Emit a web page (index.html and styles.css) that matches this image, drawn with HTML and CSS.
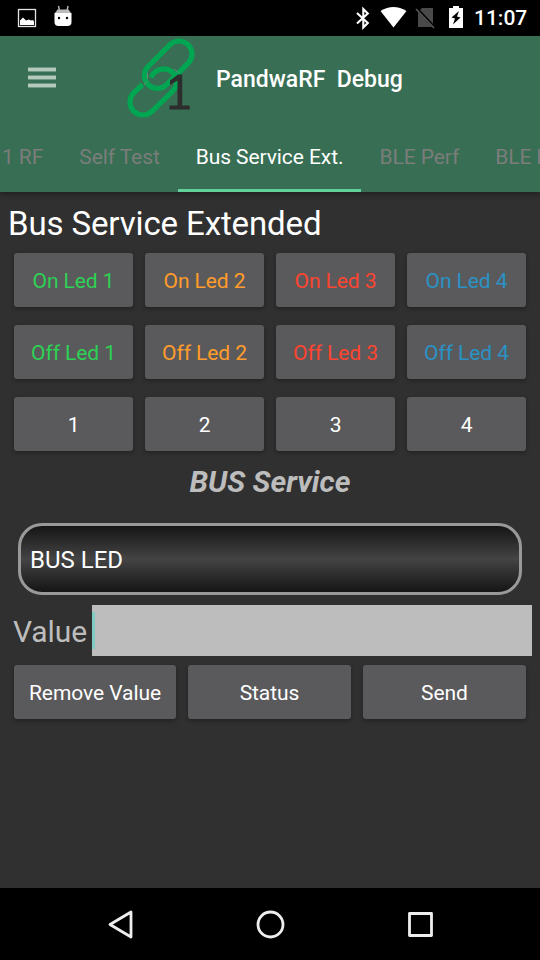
FILE: index.html
```html
<!DOCTYPE html>
<html lang="en">
<head>
<meta charset="utf-8">
<title>PandwaRF Debug</title>
<link rel="stylesheet" href="styles.css">
</head>
<body>
<div class="status">
  <svg class="status-left" width="100" height="36" viewBox="0 0 100 36">
    <rect x="18.500" y="9.500" width="17" height="17" fill="none" stroke="#e4e4e4" stroke-width="1.300"/>
    <path d="M20 25v-4.500l3-3 3 3 3-1 2 1 2-.5 1 1.500v3.500z" fill="#fff"/>
    <path d="M58.500 6l1 5M68 6l-1 5" stroke="#bbb" stroke-width="1.400"/>
    <path d="M54.500 13h17v9q0 4-4 4h-9q-4 0-4-4z" fill="#fff"/>
    <path d="M57.500 9.500h11l2.500 3.500h-16z" fill="#bbb"/>
    <circle cx="59" cy="18" r="1.200"/><circle cx="67" cy="18" r="1.200"/>
  </svg>
  <svg width="130" height="36" viewBox="350 0 130 36">
    <path d="M357 13l10.800 10-4.500 4.500V9l4.500 4.500L357 23.500" fill="none" stroke="#fff" stroke-width="2.100"/>
    <path d="M380.500 11q13-8 26 0L393.500 27.500z" fill="#fff"/>
    <path d="M422 8h11v19h-15V12z" fill="#4a4a4a"/>
    <path d="M417 9l18 19" stroke="#000" stroke-width="3"/><path d="M416 9l18 19" stroke="#5a5a5a" stroke-width="1.500"/>
    <path d="M449 8h4V6h6v2h4v20h-14z" fill="#fff"/>
    <path d="M459 11l-7.500 6.500 3.500 1-2 6 7.500-7-3.500-1z" fill="#000"/>
  </svg>
  <span class="clock">11:07</span>
</div>
<header class="header">
  <div class="toolbar">
    <div class="menu"><i></i><i></i><i></i></div>
    <svg class="logo" width="72" height="84" viewBox="0 0 72 84">
      <g fill="none" stroke="#00a651" stroke-width="5.200">
        <path d="M43.800 8.800A13 13 0 0 1 62.200 27.200L40.700 48.700A13 13 0 0 1 22.300 30.300Z"/>
        <path d="M25 41.500Q29 32.800 38 32.800A13 13 0 0 1 47.200 54.500L26.200 75.200A13 13 0 0 1 7.800 56.800L16.500 48.500"/>
      </g>
      <path d="M20.500 45l-2 4M21.500 37v6M48 33l5 4" stroke="#688c73" stroke-width="1"/>
      <path d="M52 38.500h4.200V69.500h7.500V73.500H43.500V69.500H51.500V44.500L44 49V44.500z" fill="#2d2d2d"/>
    </svg>
    <h1 class="title">PandwaRF&nbsp; Debug</h1>
  </div>
  <nav class="tabs">
    <span class="tab">1 RF</span>
    <span class="tab">Self Test</span>
    <span class="tab active">Bus Service Ext.</span>
    <span class="tab">BLE Perf</span>
    <span class="tab">BLE Perf</span>
  </nav>
</header>
<main class="content">
  <h2 class="heading">Bus Service Extended</h2>
  <div class="leds">
    <button class="btn green">On Led 1</button><button class="btn orange">On Led 2</button><button class="btn red">On Led 3</button><button class="btn blue">On Led 4</button>
    <button class="btn green">Off Led 1</button><button class="btn orange">Off Led 2</button><button class="btn red">Off Led 3</button><button class="btn blue">Off Led 4</button>
    <button class="btn">1</button><button class="btn">2</button><button class="btn">3</button><button class="btn">4</button>
  </div>
  <h3 class="subheading">BUS Service</h3>
  <div class="spinner">BUS LED</div>
  <div class="field"><span class="label">Value</span><div class="input"><i class="caret"></i></div></div>
  <div class="actions"><button class="btn">Remove Value</button><button class="btn">Status</button><button class="btn">Send</button></div>
</main>
<footer>
  <svg width="540" height="72" viewBox="0 0 540 72" fill="none" stroke="#eee" stroke-width="2.800" stroke-linejoin="round">
    <path d="M110 36.500L131 24v25z"/><circle cx="270.500" cy="36.500" r="12.500"/><rect x="409.500" y="25.500" width="22" height="22"/>
  </svg>
</footer>
</body>
</html>
```
FILE: styles.css
```css
* { box-sizing: border-box; }
body {
  margin: 0;
  width: 540px;
  height: 960px;
  overflow: hidden;
  display: flex;
  flex-direction: column;
  background: #303030;
  color: #fff;
  font-family: Roboto, sans-serif;
  font-size: 21px;
}
svg { display: block; flex: none; }
h1, h2, h3 { margin: 0; }
.status { height: 36px; flex: none; display: flex; background: #000; }
.status-left { margin-right: 250px; }
.status svg + svg { margin-right: -6px; }
.clock { line-height: 37px; font-weight: 500; white-space: nowrap; }
.header { height: 156px; flex: none; background: #386e53; box-shadow: 0 2px 6px rgba(0, 0, 0, .4); }
.toolbar { height: 84px; display: flex; }
.menu { width: 28px; margin: 31px 70px 0 28px; display: flex; flex-direction: column; gap: 3px; }
.menu i { height: 5px; background: #b3cabd; border: solid #6f9682; border-width: 1px 0; }
.title { margin-left: 18px; font-size: 23px; font-weight: 500; line-height: 88px; white-space: nowrap; }
.tabs { height: 72px; display: flex; overflow: hidden; margin-left: -16px; white-space: nowrap; }
.tab { flex: none; padding: 0 18px; line-height: 74px; letter-spacing: -.08px; color: #7b7d7b; }
.tab.active { color: #fff; height: 72px; border-bottom: 3px solid #61d199; }
.content { flex: 1; display: flex; flex-direction: column; }
.heading { height: 61px; padding-left: 8px; font-size: 33px; font-weight: 400; line-height: 63px; letter-spacing: -.12px; }
.leds { display: grid; grid-template-columns: repeat(4, 119px); grid-auto-rows: 54px; gap: 18px 12px; padding: 0 14px; }
.btn {
  height: 54px;
  padding: 2px 0 0;
  border: 0;
  border-radius: 3px;
  background: #5a5a5c;
  color: #fff;
  font: 400 21px Roboto, sans-serif;
  letter-spacing: -.07px;
  box-shadow: 0 2px 4px rgba(0, 0, 0, .3);
}
.green { color: #2dd154; }
.orange { color: #ff9c2b; }
.red { color: #ff4430; }
.blue { color: #2a92c4; }
.subheading { height: 72px; text-align: center; font-size: 30px; font-style: italic; font-weight: 700; line-height: 62px; color: #bdbdbd; }
.spinner {
  height: 72px;
  margin: 0 18px;
  padding-left: 9px;
  border: 3px solid #999;
  border-radius: 24px;
  background: linear-gradient(#151515, #444, #151515);
  font-size: 24px;
  line-height: 68px;
}
.field { display: flex; margin: 10px 8px 9px 13px; height: 51px; }
.label { width: 79px; font-size: 30px; line-height: 53px; letter-spacing: -.1px; color: #bdbdbd; }
.input { flex: 1; padding-top: 7px; background: #bdbdbd; }
.caret { display: block; width: 3px; height: 37px; background: #80cbc4; }
.actions { display: grid; grid-template-columns: 162px 163px 163px; gap: 12px; padding: 0 14px; }
footer { height: 72px; flex: none; background: #000; }
```
